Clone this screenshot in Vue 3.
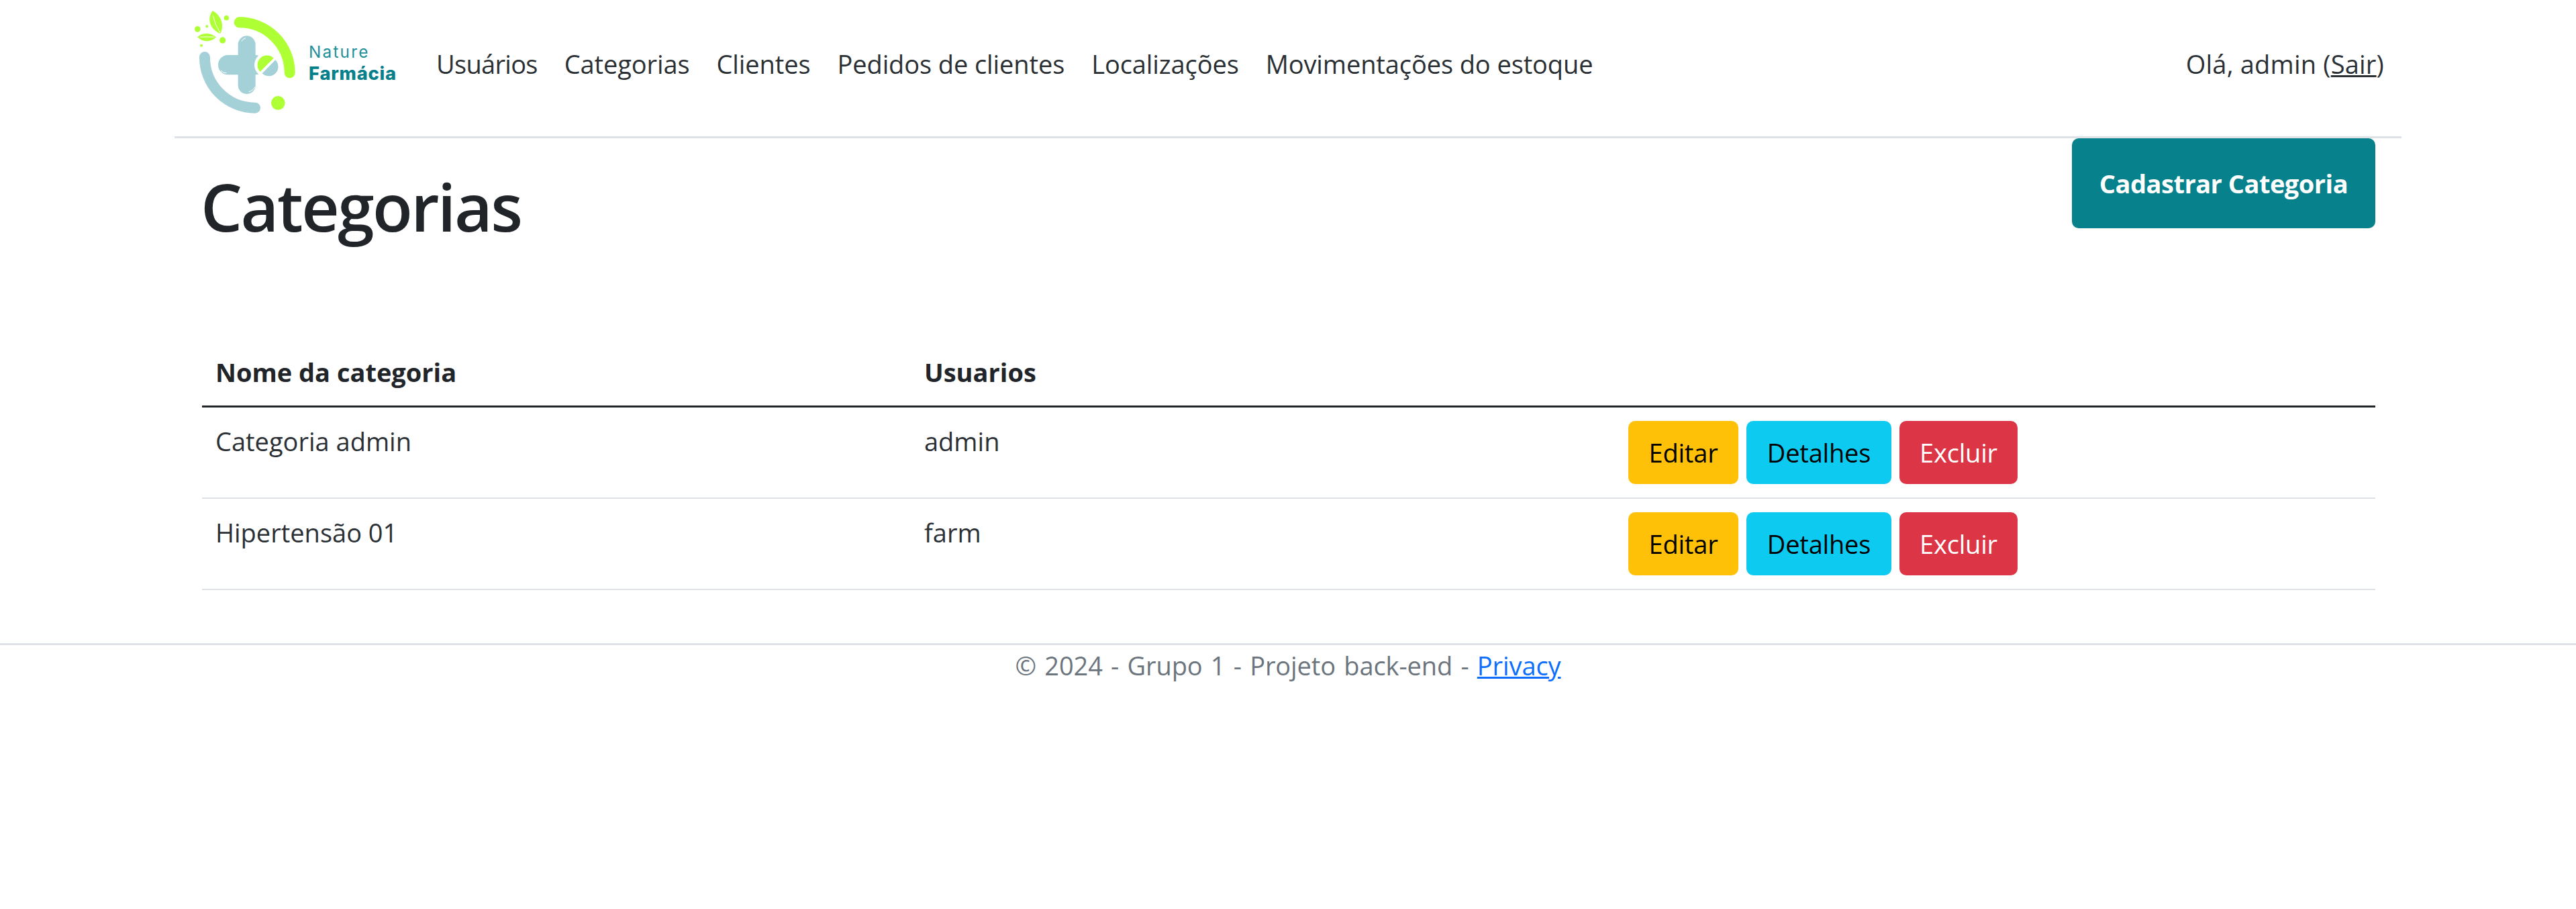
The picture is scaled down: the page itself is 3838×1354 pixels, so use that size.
<script setup>
const links = ['Usuários', 'Categorias', 'Clientes', 'Pedidos de clientes', 'Localizações', 'Movimentações do estoque']

const rows = [
  { name: 'Categoria admin', user: 'admin' },
  { name: 'Hipertensão 01', user: 'farm' },
]
</script>

<template>
  <div class="page">
    <header class="navbar">
      <a class="brand" href="#">
        <svg class="logo" viewBox="0 0 1110 609" width="370" height="203">
          <!-- arcs -->
          <path d="M290 100 A225 225 0 0 1 515 325" fill="none" stroke="#aeff33" stroke-width="48" stroke-linecap="round" />
          <path d="M135 255 A225 225 0 0 0 360 482" fill="none" stroke="#a4d0d7" stroke-width="48" stroke-linecap="round" />
          <circle cx="463" cy="460" r="31" fill="#aeff33" />
          <!-- cross -->
          <rect x="284" y="160" width="78" height="260" rx="39" fill="#a4d0d7" />
          <rect x="195" y="246" width="210" height="88" rx="44" fill="#a4d0d7" />
          <circle cx="413" cy="290" r="56" fill="#fff" />
          <path d="M300 185 Q306 172 318 170" fill="none" stroke="#fff" stroke-width="3" />
          <path d="M207 315 Q216 326 232 326" fill="none" stroke="#fff" stroke-width="3" />
          <path d="M332 410 Q350 406 360 388" fill="none" stroke="#fff" stroke-width="3" />
          <!-- pill -->
          <path d="M383 320 A42 42 0 0 1 443 260 Z" fill="#aeff33" />
          <path d="M392 328 A42 42 0 0 0 451 268 Z" fill="#a4d0d7" />
          <!-- leaves -->
          <path d="M205 150 C165 135 140 90 170 48 C205 65 225 110 205 150 Z" fill="#aeff33" />
          <path d="M186 166 C160 145 125 145 103 165 C125 190 165 190 186 166 Z" fill="#aeff33" />
          <path d="M172 70 Q180 110 203 145 M115 165 H178" fill="none" stroke="#fff" stroke-width="3" />
          <circle cx="103" cy="130" r="13" fill="#aeff33" />
          <circle cx="232" cy="80" r="11" fill="#aeff33" />
          <circle cx="215" cy="180" r="14" fill="#aeff33" />
          <circle cx="120" cy="203" r="6" fill="#aeff33" />
          <circle cx="145" cy="118" r="6" fill="#aeff33" />
          <text class="logo-top" x="600" y="258" textLength="265">Nature</text>
          <text class="logo-bottom" x="600" y="358" textLength="390">Farmácia</text>
        </svg>
      </a>
      <ul class="nav-list">
        <li v-for="link in links" :key="link"><a href="#">{{ link }}</a></li>
      </ul>
      <div class="greeting">Olá, admin (<a href="#">Sair</a>)</div>
    </header>

    <main class="container">
      <div class="title-row">
        <h1>Categorias</h1>
        <a class="btn-create" href="#">Cadastrar Categoria</a>
      </div>

      <table>
        <colgroup>
          <col class="col-a" />
          <col class="col-b" />
          <col />
        </colgroup>
        <thead>
          <tr>
            <th>Nome da categoria</th>
            <th>Usuarios</th>
            <th></th>
          </tr>
        </thead>
        <tbody>
          <tr v-for="row in rows" :key="row.name">
            <td>{{ row.name }}</td>
            <td>{{ row.user }}</td>
            <td>
              <div class="actions">
                <a class="btn btn-warning" href="#">Editar</a>
                <a class="btn btn-info" href="#">Detalhes</a>
                <a class="btn btn-danger" href="#">Excluir</a>
              </div>
            </td>
          </tr>
        </tbody>
      </table>
    </main>

    <footer class="footer">
      © 2024 - Grupo 1 - Projeto back-end - <a href="#">Privacy</a>
    </footer>
  </div>
</template>

<style>
html, body {
  margin: 0;
  background: #fff;
}
</style>

<style scoped>
.page {
  font-family: "Open Sans", "Noto Sans", sans-serif;
  font-size: 38px;
  line-height: 60px;
  letter-spacing: -0.1px;
  color: #2b3035;
}

a {
  color: inherit;
}

.navbar {
  width: 3238px;
  height: 203px;
  margin: 0 auto;
  padding: 0 40px;
  display: flex;
  align-items: center;
  border-bottom: 3px solid #dee2e6;
}

.brand {
  display: block;
  height: 203px;
  margin-left: -40px;
}

.logo {
  display: block;
}

.logo-top {
  font-family: "Inter", sans-serif;
  font-size: 73px;
  fill: #1f8f99;
}

.logo-bottom {
  font-family: "Inter", sans-serif;
  font-size: 82px;
  font-weight: 800;
  fill: #07808b;
}

.nav-list {
  display: flex;
  list-style: none;
  margin: 0 0 14px;
  padding: 0;
  flex-grow: 1;
}

.nav-list a {
  display: block;
  padding: 0 20px;
  text-decoration: none;
}

.nav-list li:first-child {
  letter-spacing: -0.7px;
}

.greeting {
  margin: 0 -14px 14px 0;
  letter-spacing: 0.2px;
}

.container {
  width: 3238px;
  margin: 0 299px 0 301px;
}

.title-row {
  display: flex;
  justify-content: space-between;
  align-items: flex-start;
  height: 298px;
}

h1 {
  margin: 41px 0 0 -2px;
  font-size: 98px;
  line-height: 120px;
  font-weight: 600;
  letter-spacing: -2.5px;
  color: #212529;
}

.btn-create {
  display: flex;
  align-items: center;
  justify-content: center;
  width: 452px;
  height: 134px;
  border-radius: 10px;
  background: #07818c;
  color: #fff;
  font-weight: 700;
  letter-spacing: -0.5px;
  text-decoration: none;
}

table {
  width: 100%;
  table-layout: fixed;
  border-collapse: collapse;
}

.col-a {
  width: 1056px;
}

.col-b {
  width: 1049px;
}

th, td {
  padding: 20px;
  text-align: left;
  vertical-align: top;
  letter-spacing: 0;
  border-bottom: 2px solid #dee2e6;
}

th {
  font-weight: 700;
  color: #212529;
  border-bottom: 3px solid #212529;
}

.actions {
  display: flex;
  gap: 12px;
  letter-spacing: -0.2px;
}

.btn {
  display: flex;
  align-items: center;
  justify-content: center;
  height: 94px;
  border-radius: 10px;
  text-decoration: none;
}

.btn-warning {
  width: 164px;
  background: #ffc107;
  color: #000;
}

.btn-info {
  width: 216px;
  background: #0dcaf0;
  color: #000;
}

.btn-danger {
  width: 176px;
  background: #dc3545;
  color: #fff;
}

.footer {
  margin-top: 79px;
  border-top: 3px solid #dee2e6;
  text-align: center;
  color: #6c757d;
  letter-spacing: -0.1px;
  word-spacing: 2.5px;
}

.footer a {
  color: #0d6efd;
}
</style>
